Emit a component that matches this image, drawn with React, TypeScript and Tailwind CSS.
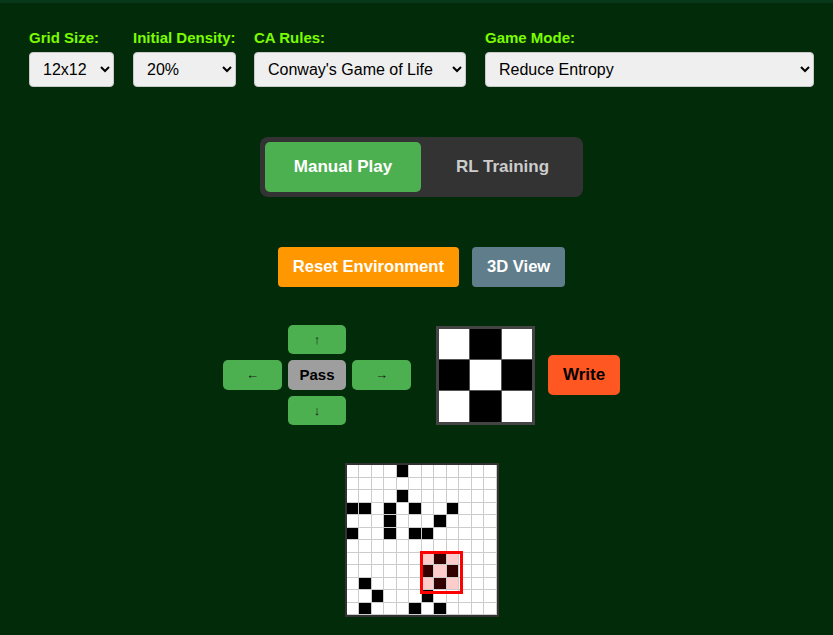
import React from "react";

const BLACK: Array<[number, number]> = [
  [0, 4], [2, 4],
  [3, 0], [3, 1], [3, 3], [3, 5], [3, 8],
  [4, 3], [4, 7],
  [5, 0], [5, 3], [5, 5], [5, 6],
  [9, 1],
  [10, 2], [10, 6],
  [11, 1], [11, 5], [11, 7],
];
const DARK: Array<[number, number]> = [[7, 7], [8, 6], [8, 8], [9, 7]];
const PINK: Array<[number, number]> = [[7, 6], [7, 8], [8, 7], [9, 6], [9, 8]];

function cellColor(r: number, c: number) {
  const has = (l: Array<[number, number]>) => l.some(([a, b]) => a === r && b === c);
  if (has(DARK)) return "bg-[#330000]";
  if (has(PINK)) return "bg-[#ffcccc]";
  if (has(BLACK)) return "bg-black";
  return "bg-white";
}

const PATTERN = [0, 1, 0, 1, 0, 1, 0, 1, 0];

export default function App() {
  const font = { fontFamily: '"Liberation Sans", Arial, sans-serif' };
  return (
    <div className="min-h-[635px] w-[833px] bg-[#022b0a] border-t-[3px] border-[#08381a]" style={font}>
      <div className="pl-[29px] pr-[19px] pt-[26px]">
        <div className="flex">
          <div className="flex flex-col gap-[5px]">
            <label className="text-[15px] font-bold text-[#7cfc00] leading-[18px]">Grid Size:</label>
            <select className="w-[85px] h-[35px] rounded-[4px] border border-[#c8c8c8] bg-[#efefef] text-[16px] text-black pl-[9px]">
              <option>12x12</option>
            </select>
          </div>
          <div className="flex flex-col gap-[5px] ml-[19px]">
            <label className="text-[15px] font-bold text-[#7cfc00] leading-[18px]">Initial Density:</label>
            <select className="w-[103px] h-[35px] rounded-[4px] border border-[#c8c8c8] bg-[#efefef] text-[16px] text-black pl-[9px]">
              <option>20%</option>
            </select>
          </div>
          <div className="flex flex-col gap-[5px] ml-[18px]">
            <label className="text-[15px] font-bold text-[#7cfc00] leading-[18px]">CA Rules:</label>
            <select className="w-[212px] h-[35px] rounded-[4px] border border-[#c8c8c8] bg-[#efefef] text-[16px] text-black pl-[9px]">
              <option>Conway's Game of Life</option>
            </select>
          </div>
          <div className="flex flex-col gap-[5px] flex-1 ml-[19px]">
            <label className="text-[15px] font-bold text-[#7cfc00] leading-[18px]">Game Mode:</label>
            <select className="w-full h-[35px] rounded-[4px] border border-[#c8c8c8] bg-[#efefef] text-[16px] text-black pl-[9px]">
              <option>Reduce Entropy</option>
            </select>
          </div>
        </div>

        <div className="flex justify-center mt-[50px]">
          <div className="flex p-[5px] bg-[#333333] rounded-[8px]">
            <button className="w-[156px] h-[50px] rounded-[5px] bg-[#4caf50] text-white font-bold text-[17px]">Manual Play</button>
            <button className="w-[157px] h-[50px] rounded-[5px] text-[#cccccc] font-bold text-[17px] pl-[6px]">RL Training</button>
          </div>
        </div>

        <div className="flex justify-center gap-[13px] mt-[50px]">
          <button className="h-[40px] px-[15px] rounded-[4px] bg-[#ff9800] text-white font-bold text-[16.6px]">Reset Environment</button>
          <button className="h-[40px] px-[15px] rounded-[4px] bg-[#607d8b] text-white font-bold text-[16.6px]">3D View</button>
        </div>

        <div className="flex justify-center items-center mt-[38px]">
          <div className="grid grid-cols-[59px_58px_59px] grid-rows-[29px_30px_29px] gap-[6px]">
            <div />
            <button className="rounded-[5px] bg-[#4caf50] text-[#1a1a1a] text-[13px]">↑</button>
            <div />
            <button className="rounded-[5px] bg-[#4caf50] text-[#1a1a1a] text-[13px]">←</button>
            <button className="rounded-[5px] bg-[#9e9e9e] text-black font-bold text-[15px]">Pass</button>
            <button className="rounded-[5px] bg-[#4caf50] text-[#1a1a1a] text-[13px]">→</button>
            <div />
            <button className="rounded-[5px] bg-[#4caf50] text-[#1a1a1a] text-[13px]">↓</button>
            <div />
          </div>
          <div className="ml-[25px] w-[99px] h-[99px] border-[3px] border-[#444444] bg-[#555555] grid grid-cols-3 gap-px">
            {PATTERN.map((v, i) => (
              <div key={i} className={v ? "bg-black" : "bg-white"} />
            ))}
          </div>
          <button className="ml-[13px] w-[72px] h-[40px] rounded-[5px] bg-[#ff5722] text-black font-bold text-[17px]">Write</button>
        </div>

        <div className="flex justify-center mt-[38px]">
          <div className="relative border-2 border-[#333333]">
            <div className="w-[150px] h-[150px] grid grid-cols-12 grid-rows-12 gap-px bg-[#cccccc] pr-px pb-px">
              {Array.from({ length: 144 }).map((_, i) => (
                <div key={i} className={cellColor(Math.floor(i / 12), i % 12)} />
              ))}
            </div>
            <div className="absolute left-[73px] top-[86px] w-[43px] h-[43px] border-[3px] border-[#ff0000]" />
          </div>
        </div>
      </div>
    </div>
  );
}
